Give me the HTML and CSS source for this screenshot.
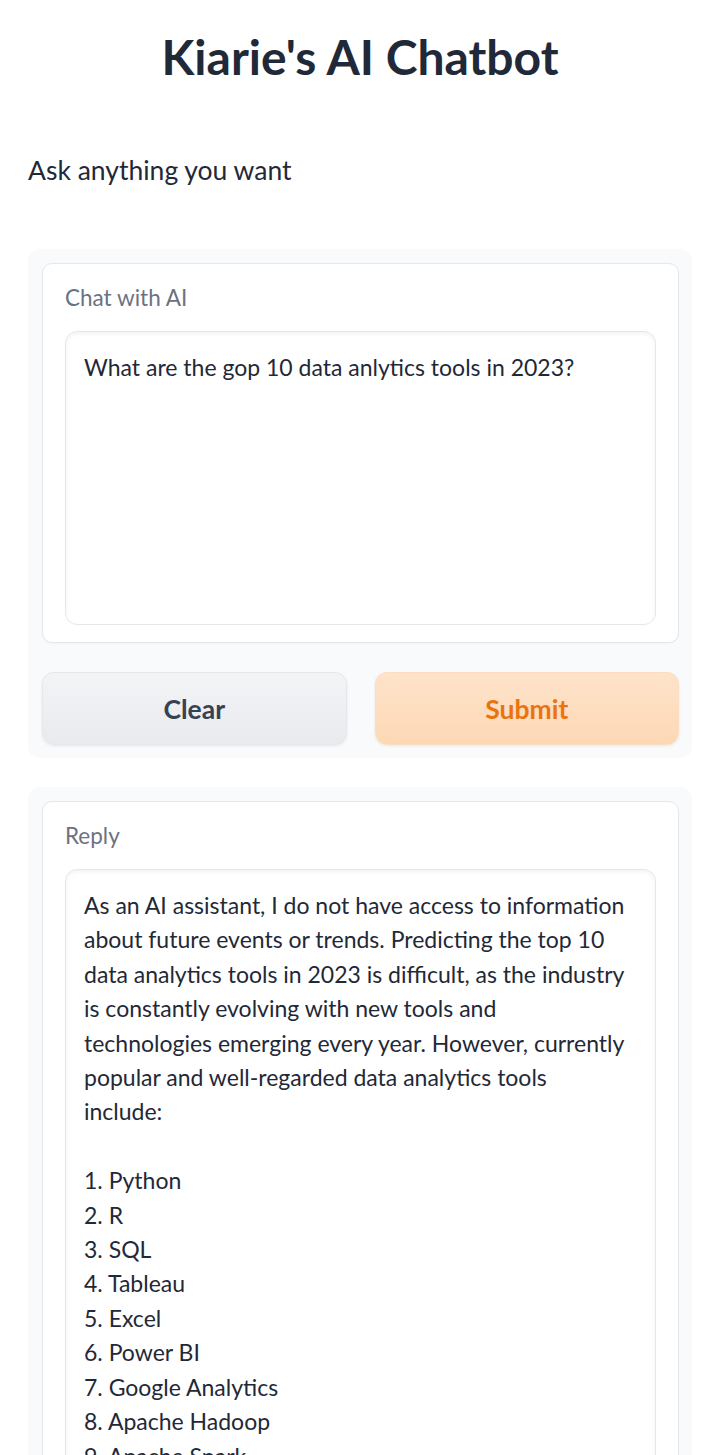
FILE: index.html
```html
<!DOCTYPE html>
<html lang="en">
<head>
<meta charset="utf-8">
<title>Kiarie's AI Chatbot</title>
<link rel="stylesheet" href="styles.css">
</head>
<body>
<main class="app">
  <h1 class="title">Kiarie's AI Chatbot</h1>
  <p class="subtitle">Ask anything you want</p>

  <section class="panel">
    <div class="block">
      <label class="label">Chat with AI</label>
      <div class="field field-input">What are the gop 10 data anlytics tools in 2023?</div>
    </div>
    <div class="actions">
      <button class="btn btn-secondary">Clear</button>
      <button class="btn btn-primary">Submit</button>
    </div>
  </section>

  <section class="panel panel-reply">
    <div class="block">
      <label class="label">Reply</label>
      <div class="field field-output">As an AI assistant, I do not have access to information
about future events or trends. Predicting the top 10
data analytics tools in 2023 is difficult, as the industry
is constantly evolving with new tools and
technologies emerging every year. However, currently
popular and well-regarded data analytics tools
include:

1. Python
2. R
3. SQL
4. Tableau
5. Excel
6. Power BI
7. Google Analytics
8. Apache Hadoop
9. Apache Spark
10. SAS

These tools are widely used for data collection,
analysis and visualization.</div>
    </div>
  </section>
</main>
</body>
</html>
```
FILE: styles.css
```css
* { box-sizing: border-box; }
html, body { margin: 0; padding: 0; background: #ffffff; }
body {
  font-family: "Lato", "Noto Sans", sans-serif;
  color: #1f2937;
}
.app {
  padding: 0 28px 40px;
  display: flex;
  flex-direction: column;
}
.title {
  margin: 0;
  padding-top: 24px;
  text-align: center;
  font-size: 48px;
  line-height: 66px;
  font-weight: 700;
  letter-spacing: 0;
  color: #1f2937;
}
.subtitle {
  margin: 0;
  padding-top: 63px;
  font-size: 26.5px;
  line-height: 34px;
  letter-spacing: 0;
  color: #1f2937;
}
.panel {
  margin-top: 62px;
  background: #f9fafb;
  border-radius: 12px;
  padding: 14px 13px 13px 14px;
  display: flex;
  flex-direction: column;
  gap: 29px;
}
.panel-reply { margin-top: 29px; }
.block {
  background: #ffffff;
  border: 1px solid #e5e7eb;
  border-radius: 10px;
  padding: 18px 22px 17px 22px;
  display: flex;
  flex-direction: column;
  gap: 17px;
  box-shadow: 0 1px 2px rgba(0,0,0,0.03);
}
.label {
  display: block;
  font-size: 22.5px;
  line-height: 32px;
  letter-spacing: 0;
  color: #6b7280;
}
.field {
  border: 1px solid #e5e7eb;
  border-radius: 12px;
  padding: 18px 18px;
  font-size: 23px;
  line-height: 34.4px;
  letter-spacing: 0;
  color: #1f2937;
  background: #ffffff;
  box-shadow: inset 0 2px 4px rgba(0,0,0,0.05);
  white-space: pre;
  overflow: hidden;
}
.field-input { height: 294px; }
.field-output { min-height: 700px; }
.actions {
  display: grid;
  grid-template-columns: 1fr 1fr;
  gap: 28px;
}
.btn {
  height: 73px;
  border-radius: 12px;
  font-family: inherit;
  font-size: 26.5px;
  font-weight: 700;
  letter-spacing: 0;
  cursor: pointer;
  box-shadow: 0 1px 3px rgba(0,0,0,0.08);
}
.btn-secondary {
  background: linear-gradient(to bottom, #f3f4f6, #e8eaee);
  border: 1px solid #e5e7eb;
  color: #374151;
}
.btn-primary {
  background: linear-gradient(to bottom, #fee3ca, #fdd8b5);
  border: 1px solid #fddcbf;
  color: #e9740f;
}
```
